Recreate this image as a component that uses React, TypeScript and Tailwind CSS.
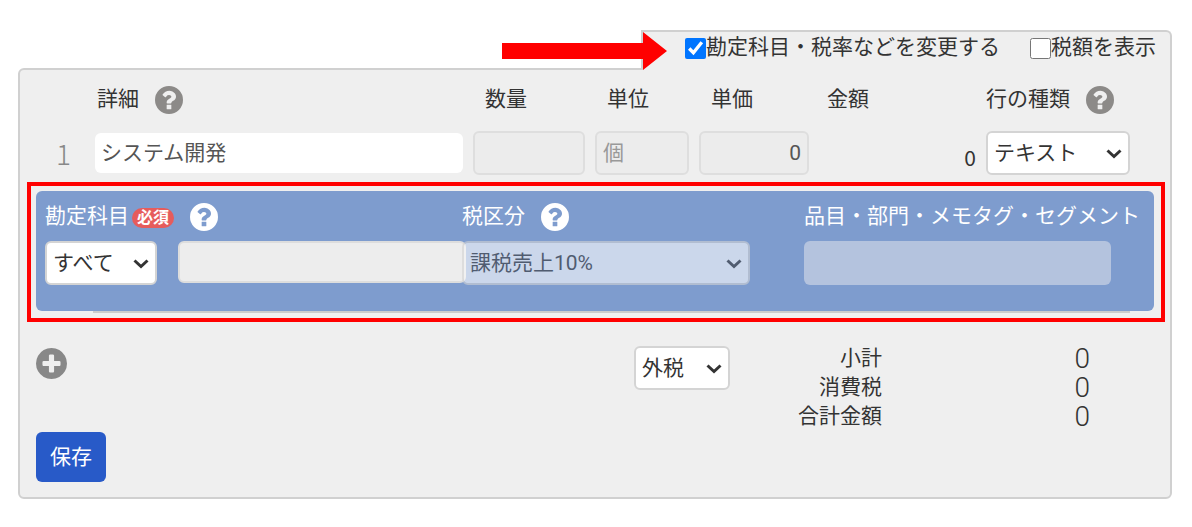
import { useState, type ReactNode } from "react";

type SelectBoxProps = {
  label: string;
  options: string[];
  className: string;
  disabled?: boolean;
};

const GRID = "grid grid-cols-[49px_1fr_112px_94px_110px_157px_144px] gap-x-2.5";
const DISABLED_INPUT =
  "h-11 w-full min-w-0 rounded-md border-2 border-[#dedede] bg-[#ececec] px-1.5";

function HelpButton({ label, className }: { label: string; className: string }) {
  return (
    <button type="button" aria-label={label} className={className}>
      <svg viewBox="128 128 1536 1536" className="size-7" fill="currentColor" aria-hidden="true">
        <path
          fillRule="evenodd"
          d="M1664 896A768 768 0 1 1 128 896A768 768 0 1 1 1664 896zM1024 1376v-192q0-14-9-23t-23-9h-192q-14 0-23 9t-9 23v192q0 14 9 23t23 9h192q14 0 23-9t9-23zM1280 704q0-88-55.5-163t-138.5-116-170-41q-243 0-371 213-15 24 8 42l132 100q7 6 19 6 16 0 25-12 53-68 86-92 34-24 86-24 48 0 85.5 26t37.5 59q0 38-20 61t-68 45q-63 28-115.5 86.5t-52.5 125.5v36q0 14 9 23t23 9h192q14 0 23-9t9-23q0-19 21.5-49.5t54.5-49.5q32-18 49-28.5t46-35 44.5-48 28-60.5 12.5-81z"
        />
      </svg>
    </button>
  );
}

function SelectBox({ label, options, className, disabled }: SelectBoxProps) {
  return (
    <div className={`relative ${disabled ? "opacity-60" : ""} ${className}`}>
      <select
        aria-label={label}
        disabled={disabled}
        className="h-11 w-full appearance-none rounded-md border-2 border-[#d4d4d4] bg-white pr-8 pl-1.5"
      >
        {options.map((o) => (
          <option key={o}>{o}</option>
        ))}
      </select>
      <svg
        viewBox="0 0 16 10"
        className="pointer-events-none absolute top-[18px] right-2 h-2.5 w-4"
        fill="none"
        stroke="#333333"
        strokeWidth="3"
        aria-hidden="true"
      >
        <path d="M1.5 1.5 8 7.5l6.5-6" />
      </svg>
    </div>
  );
}

function CheckField({
  checked,
  onChange,
  children,
}: {
  checked: boolean;
  onChange: (v: boolean) => void;
  children: ReactNode;
}) {
  return (
    <label className="flex items-center whitespace-nowrap">
      <input
        type="checkbox"
        checked={checked}
        onChange={(e) => onChange(e.target.checked)}
        className="mt-0.5 size-[21px]"
      />
      {children}
    </label>
  );
}

export default function App() {
  const [showAccount, setShowAccount] = useState(true);
  const [showTax, setShowTax] = useState(false);

  const totals = [
    { label: "小計", value: 0 },
    { label: "消費税", value: 0 },
    { label: "合計金額", value: 0 },
  ];

  return (
    <main className="min-h-screen bg-white pt-[30px] pr-5 pb-7 pl-[18px] font-['Roboto','Noto_Sans_CJK_JP',sans-serif] text-[21px] leading-[30px] text-[#333333]">
      {/* options tab on top of the panel */}
      <div className="relative z-10 -mb-0.5 ml-auto flex h-10 w-[531px] items-start justify-end gap-[30px] rounded-tr-md border-2 border-b-0 border-[#d0d0d0] bg-[#efefef] pr-3.5">
        <svg
          viewBox="0 0 165 38"
          className="absolute top-0 -left-[141px] h-[38px] w-[165px]"
          fill="#ff0000"
          aria-hidden="true"
        >
          <path d="M0 11h141V0l24 19-24 19V27H0z" />
        </svg>
        <CheckField checked={showAccount} onChange={setShowAccount}>
          勘定科目・税率などを変更する
        </CheckField>
        <CheckField checked={showTax} onChange={setShowTax}>
          税額を表示
        </CheckField>
      </div>

      <section className="rounded-md rounded-tr-none border-2 border-[#d0d0d0] bg-[#efefef] pb-[15px]">
        <div className={`${GRID} items-center pt-3.5 pr-10 pb-[17px] pl-4`}>
          <div className="col-start-2 flex items-center gap-4 pl-0.5">
            詳細
            <HelpButton label="詳細のヘルプ" className="mt-0.5 text-[#8c8a88]" />
          </div>
          <div className="pl-3">数量</div>
          <div className="pl-3">単位</div>
          <div className="pl-3">単価</div>
          <div className="pl-2">金額</div>
          <div className="flex items-center gap-4 whitespace-nowrap">
            行の種類
            <HelpButton label="行の種類のヘルプ" className="mt-0.5 text-[#8c8a88]" />
          </div>
        </div>

        <div className={`${GRID} items-center pr-10 pl-4`}>
          <div className="pr-3.5 text-right font-['Noto_Sans_CJK_JP',sans-serif] text-[28px] font-light text-[#888888]">1</div>
          <input
            aria-label="詳細"
            defaultValue="システム開発"
            className="h-10 w-full min-w-0 rounded-md bg-white px-1.5 pb-1 text-[#555555]"
          />
          <input aria-label="数量" disabled className={DISABLED_INPUT} />
          <input aria-label="単位" disabled defaultValue="個" className={`${DISABLED_INPUT} pb-1 text-[#999999]`} />
          <input aria-label="単価" disabled defaultValue="0" className={`${DISABLED_INPUT} text-right text-[#555555]`} />
          <div className="pt-2 text-right font-['Noto_Sans_CJK_JP',sans-serif]">0</div>
          <SelectBox label="行の種類" options={["テキスト", "通常", "割引"]} className="w-full" />
        </div>

        {/* account title / tax settings of the line */}
        <div className="mt-[7px] mr-[5px] ml-[7px] border-4 border-[#ff0000] pt-[5px] pr-[7px] pb-[5px] pl-[5px]">
          <div className="grid h-[120px] grid-cols-[1fr_342px_341px] grid-rows-[30px_44px] content-start gap-y-2.5 rounded-md bg-[#7e9cce] px-[9px] pt-2.5 text-white">
            <div className="flex items-center whitespace-nowrap">
              勘定科目
              <span className="mt-1 ml-[3px] rounded-full bg-[#e65c5c] px-[5px] text-base leading-5 font-bold">必須</span>
              <HelpButton label="勘定科目のヘルプ" className="mt-0.5 ml-4" />
            </div>
            <div className="flex items-center gap-4">
              税区分
              <HelpButton label="税区分のヘルプ" className="mt-0.5" />
            </div>
            <div className="whitespace-nowrap">品目・部門・メモタグ・セグメント</div>

            <div className="flex items-start gap-[21px] text-[#333333]">
              <SelectBox label="勘定科目の絞り込み" options={["すべて", "収入", "支出"]} className="w-28 shrink-0" />
              <input
                aria-label="勘定科目"
                className="-mr-1 h-[42px] min-w-0 flex-1 rounded-md border-2 border-[#dddddd] bg-[#ededed] px-1.5"
              />
            </div>
            <SelectBox label="税区分" options={["課税売上10%"]} disabled className="w-72 text-[#333333]" />
            <input
              aria-label="品目・部門・メモタグ・セグメント"
              disabled
              className="h-11 w-[307px] rounded-md bg-[#b4c3de] px-1.5"
            />
          </div>
          <hr className="mr-6 ml-[57px] border-t-2 border-[#cccccc]" />
        </div>

        <div className="flex items-start pt-[22px] pr-20 pl-4">
          <button type="button" aria-label="行を追加" className="mt-1 text-[#888888]">
            <svg viewBox="128 128 1536 1536" className="size-[31px]" fill="currentColor" aria-hidden="true">
              <path d="M1344 960v-128q0-26-19-45t-45-19h-256v-256q0-26-19-45t-45-19h-128q-26 0-45 19t-19 45v256h-256q-26 0-45 19t-19 45v128q0 26 19 45t45 19h256v256q0 26 19 45t45 19h128q26 0 45-19t19-45v-256h256q26 0 45-19t19-45zm320-64q0 209-103 385.5t-279.5 279.5-385.5 103-385.5-103-279.5-279.5-103-385.5 103-385.5 279.5-279.5 385.5-103 385.5 103 279.5 279.5 103 385.5z" />
            </svg>
          </button>
          <SelectBox label="消費税の計算" options={["外税", "内税"]} className="mt-0.5 ml-auto w-24" />
          <dl className="grid grid-cols-[152px_208px] text-right leading-[29px]">
            {totals.map((t) => (
              <div key={t.label} className="contents">
                <dt>{t.label}</dt>
                <dd className="text-[28px] leading-[29px] font-light">{t.value}</dd>
              </div>
            ))}
          </dl>
        </div>

        <button type="button" className="mt-px ml-4 h-[50px] rounded-md bg-[#285ac8] px-3.5 text-white">
          保存
        </button>
      </section>
    </main>
  );
}
